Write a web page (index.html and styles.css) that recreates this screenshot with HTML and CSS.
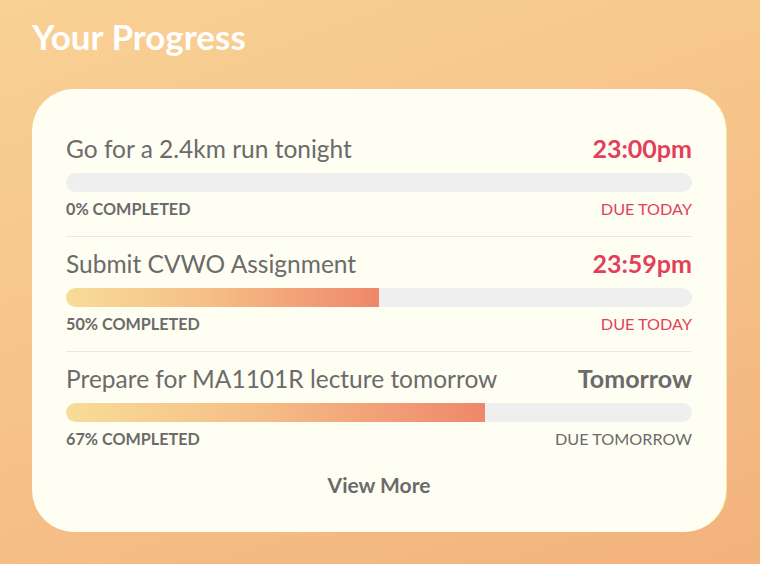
FILE: index.html
```html
<!DOCTYPE html>
<html>
<head>
<meta charset="utf-8">
<link rel="stylesheet" href="styles.css">
</head>
<body>
<div class="page">
  <h1 class="title">Your Progress</h1>
  <div class="card">
    <div class="item">
      <div class="head">
        <span class="name">Go for a 2.4km run tonight</span>
        <span class="time urgent">23:00pm</span>
      </div>
      <div class="bar"><div class="fill" style="width:0%"></div></div>
      <div class="meta">
        <span class="pct">0% COMPLETED</span>
        <span class="due urgent">DUE TODAY</span>
      </div>
    </div>
    <div class="item">
      <div class="head">
        <span class="name">Submit CVWO Assignment</span>
        <span class="time urgent">23:59pm</span>
      </div>
      <div class="bar"><div class="fill" style="width:50%"></div></div>
      <div class="meta">
        <span class="pct">50% COMPLETED</span>
        <span class="due urgent">DUE TODAY</span>
      </div>
    </div>
    <div class="item last">
      <div class="head">
        <span class="name">Prepare for MA1101R lecture tomorrow</span>
        <span class="time">Tomorrow</span>
      </div>
      <div class="bar"><div class="fill" style="width:67%"></div></div>
      <div class="meta">
        <span class="pct">67% COMPLETED</span>
        <span class="due">DUE TOMORROW</span>
      </div>
    </div>
    <div class="more">View More</div>
  </div>
</div>
</body>
</html>
```
FILE: styles.css
```css
html, body {
  margin: 0;
  padding: 0;
}
body {
  width: 760px;
  height: 564px;
  overflow: hidden;
  font-family: Lato, "Open Sans", sans-serif;
  background: linear-gradient(160deg, #f9d194 0%, #f6c38a 50%, #f3b27e 100%);
}
.page {
  padding: 12px 34px 0 32px;
}
.title {
  margin: 0;
  color: #ffffff;
  font-size: 35px;
  font-weight: 700;
  line-height: 48px;
}
.card {
  margin-top: 29px;
  background: #fffef2;
  border-radius: 42px;
  box-shadow: 1px 0 0 #f7e7a4;
  padding: 33px 34px 35px 34px;
}
.item {
  padding: 12px 0 18px;
  border-bottom: 1px solid #e8e8ec;
}
.item.last {
  border-bottom: none;
}
.head {
  display: flex;
  justify-content: space-between;
  align-items: baseline;
  color: #6b6b6b;
}
.name {
  font-size: 24.5px;
  line-height: 29px;
}
.time {
  font-size: 25px;
  font-weight: 700;
  line-height: 29px;
}
.urgent {
  color: #e23f5d;
}
.bar {
  margin-top: 10px;
  height: 19px;
  border-radius: 10px;
  background: #efeff0;
  overflow: hidden;
}
.fill {
  height: 100%;
  border-radius: 10px 0 0 10px;
  background: linear-gradient(90deg, #f8dc98 0%, #f5bf87 45%, #ef876a 100%);
}
.meta {
  margin-top: 7px;
  display: flex;
  justify-content: space-between;
  font-size: 16.2px;
  line-height: 19px;
  color: #6b6b6b;
}
.pct {
  font-weight: 700;
}
.due.urgent {
  color: #e23f5d;
}
.more {
  margin-top: 7px;
  text-align: center;
  font-size: 21px;
  font-weight: 700;
  line-height: 24px;
  color: #6b6b6b;
}
```
